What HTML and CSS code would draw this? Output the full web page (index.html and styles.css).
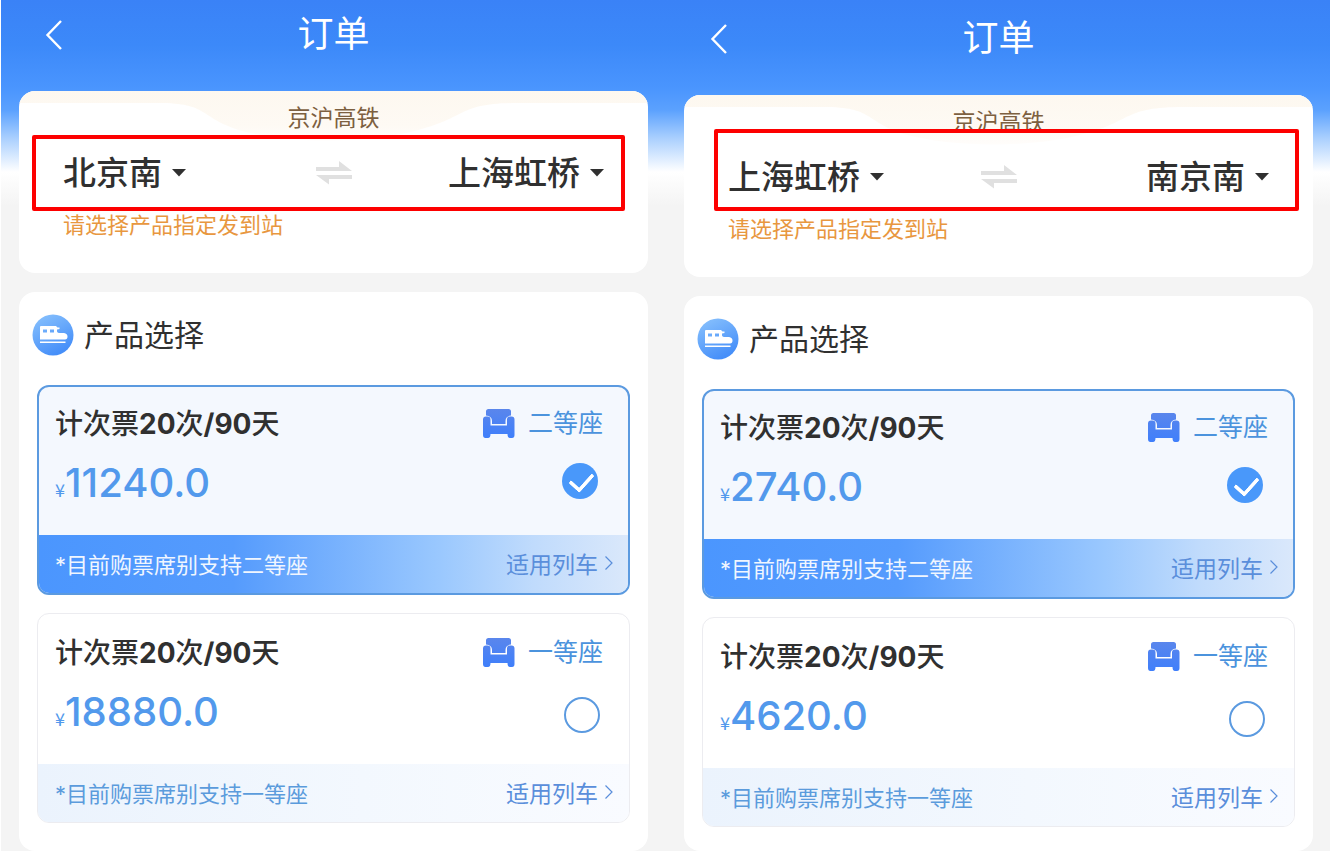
FILE: index.html
```html
<!DOCTYPE html>
<html lang="zh-CN">
<head>
<meta charset="utf-8">
<meta name="viewport" content="width=device-width, initial-scale=1">
<title>订单</title>
<link rel="stylesheet" href="styles.css">
</head>
<body>
<svg class="defs" width="0" height="0" aria-hidden="true">
  <defs>
    <linearGradient id="disc" x1="0" y1="0" x2="0.5" y2="1"><stop offset="0" stop-color="#8cc4fd"/><stop offset="1" stop-color="#468ff9"/></linearGradient>
    <linearGradient id="sofa" x1="0" y1="0" x2="0" y2="1"><stop offset="0" stop-color="#5a86ec"/><stop offset="1" stop-color="#3f7ffb"/></linearGradient>
    <linearGradient id="cream" x1="0" y1="0" x2="0" y2="1"><stop offset="0" stop-color="#fdf8f0"/><stop offset="0.7" stop-color="#fefaf4"/><stop offset="1" stop-color="#fffdfb"/></linearGradient>
    <symbol id="back" viewBox="0 0 18 32"><path d="M16 2 2.500 16 16 30" fill="none" stroke="#fff" stroke-width="2.400"/></symbol>
    <symbol id="swap" viewBox="0 0 38 24"><path d="M1 10V6H24V0L37 10ZM37 14V18H14V23.500L1 14Z" fill="#e0e0e0"/></symbol>
    <symbol id="train" viewBox="0 0 42 42"><circle cx="21" cy="21" r="20.500" fill="url(#disc)"/><path fill="#fff" fill-rule="evenodd" d="M8 13Q8 12 9 12H24L25.500 13.500H27.500V15L25 15.500V17.500Q25.500 19 27.500 19H32Q35.500 19.500 35.500 22.500Q35.500 25.500 33 25.500H8ZM11 15.500V18.500H15V15.500ZM18 15.500V18.500H22V15.500ZM8 27.500H33.500V29H8Z"/></symbol>
    <symbol id="seat" viewBox="0 0 32 29"><path fill="url(#sofa)" d="M5.500 0H25.500Q28 0 28 2.500V6.500Q22.500 7 22.500 12V15H9V12Q9 7 3 6.500V2.500Q3 0 5.500 0ZM3 7.500H4.500Q7.500 7.500 7.500 10.500V16.500H24V10.500Q24 7.500 27 7.500H28.500Q31.500 7.500 31.500 10.500V26Q31.500 29 29 29H27Q24.500 29 24.500 25H7.500Q7.500 29 5 29H2.500Q0 29 0 26V10.500Q0 7.500 3 7.500Z"/></symbol>
    <symbol id="more" viewBox="0 0 10 16"><path d="M1.500 1.500 8 8 1.500 14.500" fill="none" stroke="currentColor" stroke-width="1.200"/></symbol>
    <symbol id="caret" viewBox="0 0 14 8"><path d="M0 0H14L7 7.500Z" fill="#303030"/></symbol>
  </defs>
</svg>
<main class="screens">
  <section class="phone">
    <header class="bar">
      <button class="back" type="button" aria-label="返回"><svg><use href="#back"/></svg></button>
      <h1 class="title">订单</h1>
    </header>
    <div class="card route">
      <svg class="banner" viewBox="0 0 630 54" preserveAspectRatio="none" aria-hidden="true"><path fill="url(#cream)" d="M0 0H630V12H500C440 12 450 26 400 39C350 53 270 53 220 39C180 26 190 12 140 12H0Z"/></svg>
      <p class="line">京沪高铁</p>
      <div class="stations">
        <label class="station"><select aria-label="出发站"><option>北京南</option></select><svg><use href="#caret"/></svg></label>
        <button class="swap" type="button" aria-label="交换"><svg><use href="#swap"/></svg></button>
        <label class="station"><select aria-label="到达站"><option>上海虹桥</option></select><svg><use href="#caret"/></svg></label>
      </div>
      <p class="hint">请选择产品指定发到站</p>
      <div class="marker marker-first"></div>
    </div>
    <div class="card products">
      <h2 class="heading"><svg><use href="#train"/></svg><span>产品选择</span></h2>
      <article class="option selected">
        <label class="choice">
          <span class="name">计次票<b>20</b>次<b>/90</b>天</span>
          <span class="class"><svg><use href="#seat"/></svg>二等座</span>
          <span class="price"><small>¥</small>11240.0</span>
          <input type="radio" name="left" checked>
        </label>
        <div class="foot"><span>*目前购票席别支持二等座</span><a href="#">适用列车<svg><use href="#more"/></svg></a></div>
      </article>
      <article class="option">
        <label class="choice">
          <span class="name">计次票<b>20</b>次<b>/90</b>天</span>
          <span class="class"><svg><use href="#seat"/></svg>一等座</span>
          <span class="price"><small>¥</small>18880.0</span>
          <input type="radio" name="left">
        </label>
        <div class="foot"><span>*目前购票席别支持一等座</span><a href="#">适用列车<svg><use href="#more"/></svg></a></div>
      </article>
    </div>
  </section>
  <section class="phone lowered">
    <header class="bar">
      <button class="back" type="button" aria-label="返回"><svg><use href="#back"/></svg></button>
      <h1 class="title">订单</h1>
    </header>
    <div class="card route">
      <svg class="banner" viewBox="0 0 630 54" preserveAspectRatio="none" aria-hidden="true"><path fill="url(#cream)" d="M0 0H630V12H500C440 12 450 26 400 39C350 53 270 53 220 39C180 26 190 12 140 12H0Z"/></svg>
      <p class="line">京沪高铁</p>
      <div class="stations">
        <label class="station"><select aria-label="出发站"><option>上海虹桥</option></select><svg><use href="#caret"/></svg></label>
        <button class="swap" type="button" aria-label="交换"><svg><use href="#swap"/></svg></button>
        <label class="station"><select aria-label="到达站"><option>南京南</option></select><svg><use href="#caret"/></svg></label>
      </div>
      <p class="hint">请选择产品指定发到站</p>
      <div class="marker marker-second"></div>
    </div>
    <div class="card products">
      <h2 class="heading"><svg><use href="#train"/></svg><span>产品选择</span></h2>
      <article class="option selected">
        <label class="choice">
          <span class="name">计次票<b>20</b>次<b>/90</b>天</span>
          <span class="class"><svg><use href="#seat"/></svg>二等座</span>
          <span class="price"><small>¥</small>2740.0</span>
          <input type="radio" name="right" checked>
        </label>
        <div class="foot"><span>*目前购票席别支持二等座</span><a href="#">适用列车<svg><use href="#more"/></svg></a></div>
      </article>
      <article class="option">
        <label class="choice">
          <span class="name">计次票<b>20</b>次<b>/90</b>天</span>
          <span class="class"><svg><use href="#seat"/></svg>一等座</span>
          <span class="price"><small>¥</small>4620.0</span>
          <input type="radio" name="right">
        </label>
        <div class="foot"><span>*目前购票席别支持一等座</span><a href="#">适用列车<svg><use href="#more"/></svg></a></div>
      </article>
    </div>
  </section>
</main>
</body>
</html>
```
FILE: styles.css
```css
* { box-sizing: border-box; }
body { margin: 0; background: #fff; color: #303030; font-family: Inter, "Noto Sans CJK SC", sans-serif; }
h1, h2, p { margin: 0; font-weight: 400; }
button, select { border: 0; padding: 0; background: none; font: inherit; color: inherit; }
svg { display: block; flex: none; }
.defs { position: absolute; }

.screens { display: grid; grid-template-columns: 1fr 1fr; min-height: calc(100vh - 3px); }
.phone {
  display: flex; flex-direction: column; padding: 0 17px 0 19px;
  background: linear-gradient(#3a82f7 0, #3c89f9 45px, #4a95fe 88px, #5ba1fe 110px, #a9cffe 138px, #fff 172px, #f4f4f4 206px);
}
.phone:first-child { border-left: 1px solid #fff; padding-left: 18px; }
.lowered { padding-top: 4px; }

.bar { display: grid; grid-template-columns: 72px 1fr 72px; align-items: center; height: 68px; margin-bottom: 23px; color: #fff; }
.back { justify-self: start; padding: 2px 0 0 26px; }
.back svg { width: 18px; height: 32px; }
.title { font-size: 36px; line-height: 48px; text-align: center; }

.card { position: relative; border-radius: 16px; background: #fff; }
.route { padding: 15px 44px 36px; overflow: hidden; }
.banner { position: absolute; inset: 0 0 auto; width: 100%; height: 54px; }
.line { position: relative; font-size: 23px; line-height: 24px; text-align: center; color: #7d6040; }
.stations { display: grid; grid-template-columns: 1fr auto 1fr; align-items: center; height: 48px; margin-top: 19px; }
.station { display: flex; align-items: center; gap: 10px; font-size: 33px; line-height: 48px; font-weight: 500; }
.station:last-child { justify-self: end; }
.station select { appearance: none; height: 48px; }
.station svg { width: 14px; height: 8px; }
.swap svg { width: 38px; height: 24px; }
.hint { margin-top: 16px; font-size: 22px; line-height: 24px; color: #e8973f; }
.marker { position: absolute; border: 4px solid #fd0000; border-radius: 2px; pointer-events: none; }
.marker-first { inset: 44px 23px 62px 13px; }
.marker-second { inset: 34px 14px 66px 30px; }

.products { flex: 1; display: flex; flex-direction: column; gap: 18px; margin-top: 19px; padding: 22px 18px 24px; }
.heading { display: flex; align-items: center; gap: 10px; margin: 0 0 11px -5px; height: 42px; font-size: 30px; font-weight: 400; }
.heading svg { width: 42px; height: 42px; }
.heading span { padding-bottom: 4px; }
.option { display: flex; flex-direction: column; height: 210px; border: 1px solid #ececf0; border-radius: 12px; overflow: hidden; }
.option.selected { border: 2px solid #5b9ae0; background: #f4f8fe; }
.choice { flex: 1; display: grid; grid-template-columns: 1fr auto; align-content: start; row-gap: 15px; padding: 19px 26px 0 17px; }
.selected .choice { padding: 17px 25px 0 16px; }
.name { font-size: 28px; line-height: 40px; font-weight: 500; }
.name b { font-weight: 700; }
.class { display: flex; align-items: center; gap: 13px; font-size: 25px; line-height: 36px; height: 38px; color: #4b93dd; }
.class svg { width: 32px; height: 29px; }
.price { font-size: 40px; line-height: 48px; font-weight: 500; color: #5299ec; }
.price small { font-family: "Noto Sans CJK SC", sans-serif; font-size: 18px; font-weight: 400; }
.choice input {
  appearance: none; justify-self: end; width: 36px; height: 36px; margin: 9px 3px 0 0;
  border: 2px solid #5b9ae0; border-radius: 50%;
}
.choice input:checked {
  margin: 4px 5px 0 0; border: 0; background: #4998fa;
}
.choice input:checked::after {
  content: ""; display: block; width: 11px; height: 19px; margin: 5px 0 0 12px;
  border: solid #fff; border-width: 0 4px 4px 0; border-radius: 2px; transform: rotate(42deg);
}
.foot { display: flex; align-items: center; justify-content: space-between; height: 58px; padding: 0 15px 3px 17px; font-size: 22px; color: #5b9bdc; background: linear-gradient(90deg, #ebf3fd, #f3f8fe 55%, #f9fbff); }
.selected .foot { padding: 0 14px 3px 16px; color: #f0f6ff; background: linear-gradient(90deg, #4b96fe, #559bfd 33%, #9ac8fe 68%, #c0dbfc 84%, #dae8fb); }
.foot a { display: flex; align-items: center; gap: 6px; font-size: 23px; color: #5a8edb; text-decoration: none; }
.foot a svg { width: 10px; height: 16px; }
```
